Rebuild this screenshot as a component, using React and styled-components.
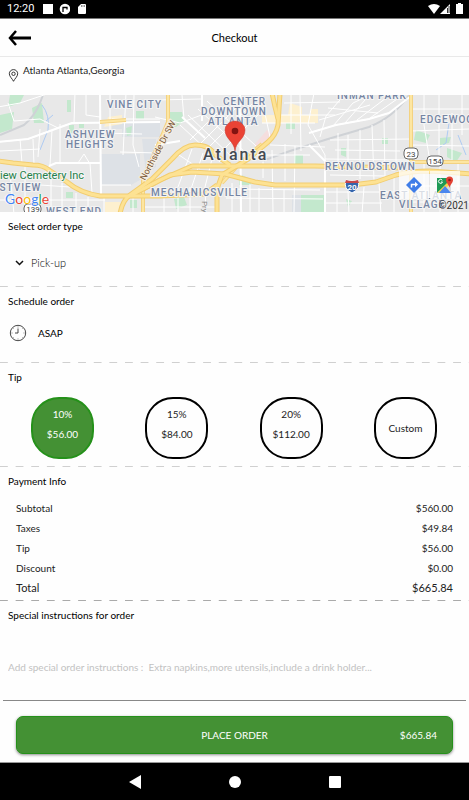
import React, { useState } from 'react'

import styled, { createGlobalStyle } from 'styled-components'

const tips = [
  { label: '10%', amount: '$56.00' },
  { label: '15%', amount: '$84.00' },
  { label: '20%', amount: '$112.00' },
  { label: 'Custom' },
]

const payment = [
  { label: 'Subtotal', amount: '$560.00' },
  { label: 'Taxes', amount: '$49.84' },
  { label: 'Tip', amount: '$56.00' },
  { label: 'Discount', amount: '$0.00' },
  { label: 'Total', amount: '$665.84', total: true },
]

const GlobalStyle = createGlobalStyle`
  * {
    box-sizing: border-box;
  }

  body {
    margin: 0;
    background: #fefefe;
    color: #000;
    font-family: Lato, "Liberation Sans", sans-serif;
    font-size: 10px;
    line-height: 14px;
  }

  button, select, textarea {
    font: inherit;
    color: inherit;
    border: none;
    background: none;
    padding: 0;
    margin: 0;
  }

  button {
    cursor: pointer;
  }

  h1, h2 {
    margin: 0;
    font-size: 10px;
    font-weight: 400;
  }

  svg {
    display: block;
  }
`

const Page = styled.div`
  min-height: 100vh;
  display: flex;
  flex-direction: column;
`

const StatusBar = styled.div`
  height: 19px;
  padding: 0 5px 0 7px;
  display: flex;
  align-items: center;
  justify-content: space-between;
  background: #000;
  border-bottom: 1px solid #777;
  color: #fff;
  font-family: Roboto, sans-serif;
  font-size: 11px;
`

const StatusGroup = styled.div`
  display: flex;
  align-items: center;
  gap: 8px;
`

const Header = styled.header`
  height: 38px;
  padding: 0 8px;
  display: grid;
  grid-template-columns: 1fr auto 1fr;
  align-items: center;
  border-bottom: 1px solid #e9e9e9;
`

const BackButton = styled.button`
  justify-self: start;
`

const PageTitle = styled.h1`
  font-size: 11px;
`

const Address = styled.div`
  height: 38px;
  padding: 6px 8px;
  display: flex;
  gap: 4px;
  color: #222;

  svg {
    margin-top: 6px;
  }
`

const MapBox = styled.div`
  position: relative;
  height: 117px;
  overflow: hidden;
  background: #e8e8e8;
`

const MapDrawing = styled.svg`
  width: 100%;
  height: 100%;
`

const MapActions = styled.div`
  position: absolute;
  right: 9px;
  bottom: 13px;
  display: flex;
  gap: 1px;
`

const MapAction = styled.button`
  width: 30px;
  height: 28px;
  display: flex;
  align-items: center;
  justify-content: center;
  background: rgb(255 255 255 / 72%);
`

const GoogleLogo = styled.div`
  position: absolute;
  left: 5px;
  bottom: 5px;
  display: flex;
  font-size: 14px;
  line-height: 16px;
  text-shadow: 0 0 1px #fff, 1px 0 1px #fff, -1px 0 1px #fff;
`

const Letter = styled.span`
  color: ${(props) => props.$color};
`

const Copyright = styled.div`
  position: absolute;
  right: 0;
  bottom: 0;
  font-family: Roboto, sans-serif;
  line-height: 12px;
  color: #333;
`

const AreaLabel = styled.text`
  font-family: Roboto, sans-serif;
  font-size: 10px;
  font-weight: 500;
  letter-spacing: 1px;
  fill: #7585a3;
  stroke: #f4f4f4;
  stroke-width: 2px;
  paint-order: stroke;
`

const CityLabel = styled(AreaLabel)`
  font-size: 16px;
  letter-spacing: 2px;
  fill: #444a52;
`

const RoadLabel = styled.text`
  font-family: Roboto, sans-serif;
  font-size: ${(props) => props.$size || 8}px;
  font-weight: ${(props) => props.$weight || 400};
  fill: ${(props) => props.$fill || '#444'};
  stroke: ${(props) => props.$halo || 'none'};
  stroke-width: 2px;
  paint-order: stroke;
`

const Section = styled.section`
  height: ${(props) => props.$height}px;
  padding: 7px 8px 0;
  background: linear-gradient(to right, ${(props) => props.$dash || '#d0d0d0'} 50%, transparent 50%)
    left bottom / calc(100% / 30) 1px repeat-x;
`

const OrderType = styled.div`
  margin-top: 22px;
  padding-left: 7px;
  display: flex;
  align-items: center;
  gap: 7px;
`

const OrderSelect = styled.select`
  appearance: none;
  width: 80px;
  height: 16px;
  font-size: 11px;
  font-weight: 300;
`

const ScheduleButton = styled.button`
  margin-top: 16px;
  padding-left: 1px;
  display: flex;
  align-items: center;
  gap: 11px;
`

const TipList = styled.div`
  margin-top: 13px;
  padding: 0 24px 0 23px;
  display: flex;
  justify-content: space-between;
`

const TipButton = styled.button`
  width: 63px;
  height: 62px;
  display: flex;
  flex-direction: column;
  align-items: center;
  justify-content: center;
  gap: 6px;
  border: 2px solid ${(props) => (props.$active ? '#25911a' : '#000')};
  border-radius: 28px;
  background: ${(props) => (props.$active ? '#449134' : 'transparent')};
  color: ${(props) => (props.$active ? '#fff' : '#222')};
  padding-bottom: ${(props) => (props.$split ? 8 : 0)}px;
`

const PaymentTable = styled.table`
  width: 100%;
  margin-top: 10px;
  border-collapse: collapse;
`

const PaymentRow = styled.tr`
  height: 20px;
  font-size: ${(props) => (props.$total ? 11 : 10)}px;

  th, td {
    padding: 0 8px;
    color: #222;
    font-weight: 400;
    text-align: left;
  }

  td {
    text-align: right;
  }
`

const Instructions = styled.section`
  flex: 1;
  margin: 0 3px;
  padding: 7px 5px 0;
  display: flex;
  flex-direction: column;
  border-bottom: 1px solid #888;
`

const InstructionsInput = styled.textarea`
  flex: 1;
  margin-top: 38px;
  width: 100%;
  height: 30px;
  resize: none;
  outline: none;

  &::placeholder {
    color: #c2c2c2;
    opacity: 1;
  }
`

const Footer = styled.footer`
  padding: 15px 16px 8px;
`

const PlaceOrder = styled.button`
  width: 100%;
  height: 38px;
  padding: 0 15px;
  display: grid;
  grid-template-columns: 1fr auto 1fr;
  align-items: center;
  border: 1px solid #25911a;
  border-radius: 7px;
  background: #449134;
  color: #fff;
  box-shadow: 0 1px 3px rgb(0 0 0 / 45%);
`

const OrderText = styled.span`
  grid-column: 2;
`

const OrderAmount = styled.span`
  justify-self: end;
`

const NavBar = styled.nav`
  height: 38px;
  display: flex;
  align-items: center;
  justify-content: center;
  gap: 88px;
  background: #000;
  border-top: 1px solid #999;
`

const RoadLayer = styled.g`
  fill: none;
  stroke: ${(props) => props.$color};
  stroke-width: ${(props) => props.$width};
  stroke-linejoin: round;
`

const highways = [
  'M-2 66 L13 68 L33 70 Q43 70 49 75 L67 87 Q80 98 100 101 L160 101 L205 99 L217 90',
  'M120 119 Q122 106 130 100 L152 84 L172 64 Q184 50 195 50 Q210 50 215 60 L230 70',
  'M130 101 L160 85 L192 71 L315 71 L404 73',
  'M143 94 L170 80 L192 77 L225 79 L255 87 L275 90 L352 90 L376 87 L396 80 Q410 76 430 76 L471 79',
  'M280 -2 L278 30 Q276 40 268 47 L248 64 L222 80 L217 94 L217 119',
  'M272 -2 L275 12 L278 24',
]

const avenues = [
  'M168 -2 L168 27 L143 85 L143 119',
  'M411 -2 L411 119',
  'M411 67 L471 67',
  'M100 27 L126 25',
  'M222 88 L240 68 L262 49',
]

const streets = [
  'M-2 47 L28 44 L58 33 L72 28 L160 27',
  'M-2 12 L20 8 L50 -2', 'M8 8 L14 26 L40 24 L58 33', 'M20 44 L22 68', 'M33 44 L34 70',
  'M0 56 L40 54', 'M40 34 L38 62', 'M52 35 L50 70 L45 78', 'M49 71 L56 68 L100 68', 'M60 29 L60 68',
  'M75 -2 L74 28', 'M86 -2 L86 20 L100 22', 'M100 -2 L101 101', 'M90 68 L92 98', 'M78 68 L84 59 L90 69',
  'M110 -2 L110 40', 'M126 -2 L123 60', 'M134 0 L133 50 L139 72', 'M112 24 L160 24', 'M100 38 L142 39',
  'M120 57 L158 58', 'M101 90 L131 90', 'M10 78 L14 119', 'M25 72 L25 119', 'M51 80 L51 119', 'M40 90 L70 92',
  'M62 88 L62 119', 'M76 98 L76 119', 'M0 105 L105 105', 'M88 102 L88 119', 'M104 103 L104 119', 'M133 103 L133 119',
  'M155 5 L202 4', 'M182 0 L184 24 L205 43', 'M155 22 L180 28 L215 15', 'M190 45 L222 13', 'M199 50 L240 9',
  'M207 54 L258 3', 'M218 60 L264 14', 'M180 30 L220 67', 'M188 20 L233 63', 'M198 14 L246 58', 'M207 6 L256 51',
  'M155 50 L180 46', 'M176 58 L200 74', 'M192 54 L178 92', 'M203 58 L191 94', 'M212 64 L204 96',
  'M202 -2 L202 26', 'M240 -2 L241 119', 'M264 14 L270 42', 'M262 28 L315 28', 'M278 20 L335 20', 'M284 8 L340 7',
  'M291 -2 L291 39', 'M300 0 L301 56', 'M314 -2 L308 30 L325 60 L325 119', 'M270 50 L325 52',
  'M263 53 L263 83', 'M272 55 L273 117', 'M285 49 L285 86', 'M295 51 L294 117', 'M253 60 L310 60',
  'M225 94 L320 95', 'M226 103 L323 104', 'M232 88 L232 119', 'M250 89 L250 119', 'M259 93 L259 119', 'M284 94 L284 119',
  'M178 93 L178 119', 'M190 92 L190 119', 'M205 92 L206 119', 'M164 103 L164 119', 'M145 112 L217 112',
  'M309 38 L336 30 L369 24 L389 18 L411 1', 'M320 42 L326 21 L346 -2', 'M333 31 L353 8 L374 -2',
  'M345 28 L365 5', 'M357 25 L390 0', 'M370 23 L400 2', 'M328 13 L378 18', 'M319 25 L370 10',
  'M338 38 L338 70', 'M348 40 L348 67', 'M360 35 L360 84', 'M372 30 L374 86', 'M384 25 L385 82', 'M396 14 L396 70',
  'M330 45 L411 44', 'M335 55 L400 56', 'M325 64 L410 65', 'M330 80 L385 81',
  'M325 97 L411 97', 'M325 108 L382 108', 'M337 92 L337 119', 'M348 96 L349 119', 'M364 92 L362 119', 'M379 88 L381 119', 'M394 83 L394 119',
  'M411 14 L469 14', 'M424 -2 L424 30 L430 67', 'M439 0 L439 67', 'M452 18 L452 67', 'M462 -2 L462 40', 'M411 36 L469 34',
  'M411 50 L469 51', 'M424 68 L424 119', 'M440 67 L440 119', 'M458 67 L458 119', 'M411 91 L469 91', 'M411 107 L469 107',
]

const AreaLabels = [
  [107, 13, 'VINE CITY'],
  [65, 43, 'ASHVIEW'],
  [66, 53, 'HEIGHTS'],
  [223, 10, 'CENTER'],
  [201, 20, 'DOWNTOWN'],
  [208, 30, 'ATLANTA'],
  [337, 4, 'INMAN PARK'],
  [420, 28, 'EDGEWOOD'],
  [325, 75, 'REYNOLDSTOWN'],
  [380, 104, 'EAST ATLANTA'],
  [399, 113, 'VILLAGE'],
  [151, 101, 'MECHANICSVILLE'],
  [-17, 96, 'WESTVIEW'],
  [46, 120, 'WEST END'],
]

function CityMap() {
  return (
    <MapDrawing viewBox="0 0 469 117" preserveAspectRatio="xMidYMid slice" role="img" aria-label="Map of Atlanta">
      <rect width="469" height="117" fill="#e8e8e8" />
      <g fill="#dde1e6">
        <path d="M101 59 H140 V85 L131 90 H101 Z" />
        <path d="M112 26 H160 V42 H122 V34 H112 Z" />
        <path d="M142 44 H156 V72 L146 80 Z" />
        <path d="M292 100 H312 V117 H292 Z" />
      </g>
      <g fill="#c3e8cd">
        <path d="M0 20 L14 17 L12 34 L0 38 Z" />
        <path d="M10 0 H24 L20 8 L8 12 Z" />
        <path d="M32 13 L42 8 L44 28 L34 28 Z" />
        <path d="M67 5 H71 V17 H67 Z" />
        <path d="M79 29 H84 V33 H79 Z M69 30 H74 V38 H69 Z" />
        <path d="M126 33 L132 31 L131 40 L127 41 Z M136 16 H144 V24 H136 Z" />
        <path d="M66 97 H73 V103 H66 Z M130 105 H137 V113 H130 Z" />
        <path d="M170 17 H182 L184 26 L176 32 H170 Z" />
        <path d="M174 104 L184 102 L187 110 L176 114 Z" />
        <path d="M239 79 L251 84 V90 H239 Z M286 26 H295 V34 H286 Z M294 60 H303 V70 H294 Z" />
        <path d="M301 100 H325 V117 H301 Z M341 53 H346 V62 L341 60 Z M382 43 H388 V49 H382 Z" />
        <path d="M416 35 L430 40 L426 48 L414 45 Z M440 43 L451 42 L449 48 L440 50 Z M346 104 L352 106 L348 112 Z M447 53 L462 58 L456 67 L447 62 Z" />
      </g>
      <g fill="#fdf0cf">
        <path d="M108 22 L122 20 V29 L104 32 L106 28 Z M105 107 H120 V117 H105 Z" />
        <path d="M262 20 H315 V28 H262 Z M290 8 L302 12 V20 L288 20 Z M311 14 H318 V28 H311 Z" />
      </g>
      <path d="M254 50 L267 35 L273 40 L261 54 Z" fill="#f5dede" />
      <RoadLayer $color="#cfd2d6" $width={2}>
        <path d="M0 40 L24 30 Q34 22 40 8 L43 0" />
        <path d="M262 66 L290 56 L328 44 L369 32 Q394 22 409 0" />
      </RoadLayer>
      <RoadLayer $color="#aecbf3" $width={1}>
        <path d="M42 10 Q50 20 48 35 L40 55 M46 26 L53 20" />
        <path d="M449 28 L446 48 L436 55 M458 40 L466 60" />
      </RoadLayer>
      <RoadLayer $color="#fff" $width={1}>
        {streets.map((d) => <path key={d} d={d} />)}
      </RoadLayer>
      <RoadLayer $color="#fff" $width={2}>
        <path d="M-2 47 L28 44 L58 33 L72 28 L160 27 M155 50 L180 46 M240 -2 L241 119" />
        <path d="M205 43 L182 22 M202 -2 L202 26 M49 71 L56 68 L100 68 M100 -2 L101 101" />
        <path d="M309 38 L336 30 L369 24 L389 18 L411 1 M309 50 L325 66 L325 119" />
      </RoadLayer>
      <RoadLayer $color="#f3d281" $width={4}>
        {avenues.map((d) => <path key={d} d={d} />)}
      </RoadLayer>
      <RoadLayer $color="#fde6a1" $width={2}>
        {avenues.map((d) => <path key={d} d={d} />)}
      </RoadLayer>
      <RoadLayer $color="#f2cd70" $width={5}>
        {highways.map((d) => <path key={d} d={d} />)}
      </RoadLayer>
      <RoadLayer $color="#fde293" $width={3}>
        {highways.map((d) => <path key={d} d={d} />)}
      </RoadLayer>
      {AreaLabels.map(([x, y, text]) => <AreaLabel key={text} x={x} y={y}>{text}</AreaLabel>)}
      <RoadLabel x="84" y="84" textAnchor="end" $size={11} $fill="#25814a" $halo="#f4f4f4">Westview Cemetery Inc</RoadLabel>
      <RoadLabel transform="translate(145 86) rotate(-62)" $size={9} $fill="#7b5836" $halo="#f6efe2">Northside Dr SW</RoadLabel>
      <RoadLabel transform="translate(202 106) rotate(90)" $size={8} $fill="#888">Pryor</RoadLabel>
      <CityLabel x="203" y="65">Atlanta</CityLabel>
      <g fill="#fff" stroke="#666">
        <rect x="404" y="53" width="14" height="11" rx="4" />
        <rect x="427" y="61" width="16" height="10" rx="4" />
        <rect x="24" y="109" width="17" height="10" rx="4" />
      </g>
      <RoadLabel x="411" y="62" textAnchor="middle">23</RoadLabel>
      <RoadLabel x="435" y="69" textAnchor="middle">154</RoadLabel>
      <RoadLabel x="33" y="117" textAnchor="middle">139</RoadLabel>
      <path d="M346 85 Q352 87 358 85 Q361 94 352 98 Q343 94 346 85 Z" fill="#3565ad" stroke="#fff" />
      <path d="M346 85 Q352 87 358 85 L359 88 H345 Z" fill="#c5474b" />
      <RoadLabel x="352" y="95" textAnchor="middle" $fill="#fff" $weight={700}>20</RoadLabel>
      <path d="M235 56 C234 46 225 44 225 35 A10 9 0 0 1 245 35 C245 44 236 46 235 56 Z" fill="#ea4335" stroke="#c5372c" strokeWidth="0.5" />
      <circle cx="235" cy="36" r="3.3" fill="#811411" />
    </MapDrawing>
  )
}

export default function App() {
  const [tip, setTip] = useState('10%')
  const [orderType, setOrderType] = useState('Pick-up')
  const [note, setNote] = useState('')

  return (
    <Page>
      <GlobalStyle />
      <StatusBar>
        <StatusGroup>
          <span>12:20</span>
          <svg width="28" height="12" viewBox="0 0 28 12" fill="none" aria-hidden="true">
            <rect x="1" width="10" height="10" y="1" fill="#fff" />
            <circle cx="23" cy="6" r="5.3" fill="#fff" />
            <path d="M21 9 V4.500 H25 V6.500" stroke="#000" strokeWidth="1.300" />
          </svg>
          <svg width="8" height="10" viewBox="0 0 8 10" aria-hidden="true">
            <path d="M3 0 H7 Q8 0 8 1 V9 Q8 10 7 10 H1 Q0 10 0 9 V3 Z" fill="#fff" />
            <path d="M3.500 1 V3 M5 1 V3 M6.500 1 V3" stroke="#666" strokeWidth="0.700" />
          </svg>
        </StatusGroup>
        <svg width="36" height="12" viewBox="0 0 36 12" fill="#fff" aria-hidden="true">
          <path d="M0 3 Q6 -1 12 3 L6 11 Z" />
          <path d="M12 11 L22 1 V11 Z" />
          <path d="M19.500 5 V10 M21 3 V10" stroke="#000" strokeWidth="0.800" />
          <path d="M30 0 H33 V1 H35 V11 H28 V1 H30 Z" />
        </svg>
      </StatusBar>

      <Header>
        <BackButton aria-label="Back">
          <svg width="24" height="16" viewBox="0 0 24 16" fill="none" stroke="#000" strokeWidth="3">
            <path d="M2 8 H23" />
            <path d="M8 1 L2 8 L8 15" strokeWidth="2.500" />
          </svg>
        </BackButton>
        <PageTitle>Checkout</PageTitle>
      </Header>

      <Address>
        <svg width="11" height="13" viewBox="0 0 11 13" fill="none" stroke="#222" strokeWidth="0.900" aria-hidden="true">
          <path d="M5.500 12.300 C4.500 10 1.300 7.500 1.300 4.800 A4.200 4.200 0 0 1 9.700 4.800 C9.700 7.500 6.500 10 5.500 12.300 Z" />
          <circle cx="5.500" cy="4.800" r="1.700" />
        </svg>
        <span>Atlanta Atlanta,Georgia</span>
      </Address>

      <MapBox>
        <CityMap />
        <GoogleLogo>
          <Letter $color="#4285f4">G</Letter>
          <Letter $color="#ea4335">o</Letter>
          <Letter $color="#fbbc05">o</Letter>
          <Letter $color="#4285f4">g</Letter>
          <Letter $color="#34a853">l</Letter>
          <Letter $color="#ea4335">e</Letter>
        </GoogleLogo>
        <MapActions>
          <MapAction aria-label="Directions">
            <svg width="16" height="16" viewBox="0 0 16 16">
              <path d="M8 0 L16 8 L8 16 L0 8 Z" fill="#3f7de8" />
              <path d="M5.500 10.500 V7.500 H10" stroke="#fff" strokeWidth="1.500" fill="none" />
              <path d="M9 4.800 L12 7.500 L9 10.200 Z" fill="#fff" />
            </svg>
          </MapAction>
          <MapAction aria-label="Open in Google Maps">
            <svg width="18" height="18" viewBox="0 0 18 18">
              <path d="M1 2 H15 V17 H1 Z" fill="#dadada" />
              <path d="M1 2 H13 V6 L1 17 Z" fill="#1e9a55" />
              <path d="M1 17 L13 5 L15 7 L5 17 Z" fill="#fbd34b" />
              <path d="M3 17 L9 10 L15 17 Z" fill="#4a86ee" />
              <path d="M6.300 4.300 A2 2 0 1 0 6.500 6 H5" stroke="#fff" fill="none" />
              <path d="M13.500 12 C13 8.500 10 7 10 4 A3.500 3.500 0 0 1 17 4 C17 7 14 8.500 13.500 12 Z" fill="#e34133" />
              <circle cx="13.500" cy="4" r="1.300" fill="#8e1c16" />
            </svg>
          </MapAction>
        </MapActions>
        <Copyright>©2021</Copyright>
      </MapBox>

      <Section $height={75}>
        <h2 id="order-type">Select order type</h2>
        <OrderType>
          <svg width="9" height="6" viewBox="0 0 9 6" fill="none" stroke="#111" strokeWidth="1.500" aria-hidden="true">
            <path d="M1 1 L4.500 4.500 L8 1" />
          </svg>
          <OrderSelect aria-labelledby="order-type" value={orderType} onChange={(e) => setOrderType(e.target.value)}>
            <option>Pick-up</option>
            <option>Delivery</option>
          </OrderSelect>
        </OrderType>
      </Section>

      <Section $height={76}>
        <h2>Schedule order</h2>
        <ScheduleButton>
          <svg width="18" height="18" viewBox="0 0 18 18" fill="none" stroke="#333" strokeWidth="0.900" aria-hidden="true">
            <circle cx="9" cy="9" r="7.700" />
            <path d="M9 4.500 V9 H6" />
            <path d="M9 2.500 V3.500 M9 14.500 V15.500 M2.500 9 H3.500 M14.500 9 H15.500 M4.500 4.500 L5 5 M13 5 L13.500 4.500 M4.500 13.500 L5 13 M13 13 L13.500 13.500" stroke="#777" />
          </svg>
          <span>ASAP</span>
        </ScheduleButton>
      </Section>

      <Section $height={104}>
        <h2>Tip</h2>
        <TipList>
          {tips.map((item) => (
            <TipButton
              key={item.label}
              $active={tip === item.label}
              $split={item.amount}
              aria-pressed={tip === item.label}
              onClick={() => setTip(item.label)}
            >
              <span>{item.label}</span>
              {item.amount && <span>{item.amount}</span>}
            </TipButton>
          ))}
        </TipList>
      </Section>

      <Section $height={134} $dash="#aaa">
        <h2>Payment Info</h2>
        <PaymentTable>
          <tbody>
            {payment.map((row) => (
              <PaymentRow key={row.label} $total={row.total}>
                <th scope="row">{row.label}</th>
                <td>{row.amount}</td>
              </PaymentRow>
            ))}
          </tbody>
        </PaymentTable>
      </Section>

      <Instructions>
        <h2><label htmlFor="note">Special instructions for order</label></h2>
        <InstructionsInput
          id="note"
          value={note}
          placeholder="Add special order instructions :  Extra napkins,more utensils,include a drink holder..."
          onChange={(e) => setNote(e.target.value)}
        />
      </Instructions>

      <Footer>
        <PlaceOrder>
          <OrderText>PLACE ORDER</OrderText>
          <OrderAmount>$665.84</OrderAmount>
        </PlaceOrder>
      </Footer>

      <NavBar>
        <button aria-label="Back">
          <svg width="12" height="14" viewBox="0 0 12 14"><path d="M0 7 L12 0 V14 Z" fill="#fff" /></svg>
        </button>
        <button aria-label="Home">
          <svg width="12" height="12" viewBox="0 0 12 12"><circle cx="6" cy="6" r="6" fill="#fff" /></svg>
        </button>
        <button aria-label="Recent apps">
          <svg width="12" height="12" viewBox="0 0 12 12"><rect width="12" height="12" rx="1" fill="#fff" /></svg>
        </button>
      </NavBar>
    </Page>
  )
}
